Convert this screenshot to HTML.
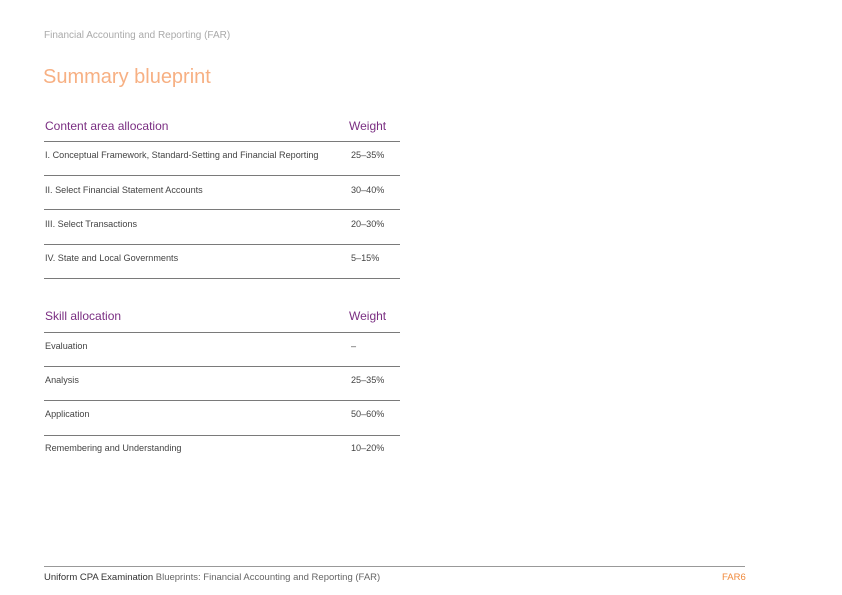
<!DOCTYPE html>
<html><head><meta charset="utf-8"><style>
*{margin:0;padding:0;box-sizing:border-box}
body{width:842px;height:595px;background:#fff;position:relative;overflow:hidden;font-family:"Liberation Sans",sans-serif}
.t{position:absolute;white-space:nowrap;line-height:1}
.hr{position:absolute;left:44px;width:356px;height:1px;background:#7a7a7a}
.row{font-size:9.1px;color:#444}
.hd{font-size:12px;color:#7a2e82}
</style></head><body>
<div class="t" style="left:44px;top:31px;font-size:10px;color:#aaa">Financial Accounting and Reporting (FAR)</div>
<div class="t" style="left:43px;top:67px;font-size:20px;color:#f7b083;font-weight:300">Summary blueprint</div>

<div class="t hd" style="left:45px;top:120px">Content area allocation</div>
<div class="t hd" style="left:349px;top:120px">Weight</div>
<div class="hr" style="top:141px"></div>
<div class="t row" style="left:45px;top:151px">I. Conceptual Framework, Standard-Setting and Financial Reporting</div>
<div class="t row" style="left:351px;top:151px">25–35%</div>
<div class="hr" style="top:175px"></div>
<div class="t row" style="left:45px;top:186px">II. Select Financial Statement Accounts</div>
<div class="t row" style="left:351px;top:186px">30–40%</div>
<div class="hr" style="top:209px"></div>
<div class="t row" style="left:45px;top:220px">III. Select Transactions</div>
<div class="t row" style="left:351px;top:220px">20–30%</div>
<div class="hr" style="top:244px"></div>
<div class="t row" style="left:45px;top:254px">IV. State and Local Governments</div>
<div class="t row" style="left:351px;top:254px">5–15%</div>
<div class="hr" style="top:278px"></div>

<div class="t hd" style="left:45px;top:310px">Skill allocation</div>
<div class="t hd" style="left:349px;top:310px">Weight</div>
<div class="hr" style="top:332px"></div>
<div class="t row" style="left:45px;top:342px">Evaluation</div>
<div class="t row" style="left:351px;top:342px">–</div>
<div class="hr" style="top:366px"></div>
<div class="t row" style="left:45px;top:376px">Analysis</div>
<div class="t row" style="left:351px;top:376px">25–35%</div>
<div class="hr" style="top:400px"></div>
<div class="t row" style="left:45px;top:410px">Application</div>
<div class="t row" style="left:351px;top:410px">50–60%</div>
<div class="hr" style="top:435px"></div>
<div class="t row" style="left:45px;top:444px">Remembering and Understanding</div>
<div class="t row" style="left:351px;top:444px">10–20%</div>

<div style="position:absolute;left:44px;top:566px;width:701px;height:1px;background:#999"></div>
<div class="t" style="left:44px;top:573px;font-size:9.5px;color:#666"><span style="color:#333">Uniform CPA Examination</span> Blueprints: Financial Accounting and Reporting (FAR)</div>
<div class="t" style="left:722px;top:573px;font-size:9.5px;color:#f08a3c">FAR6</div>
</body></html>
